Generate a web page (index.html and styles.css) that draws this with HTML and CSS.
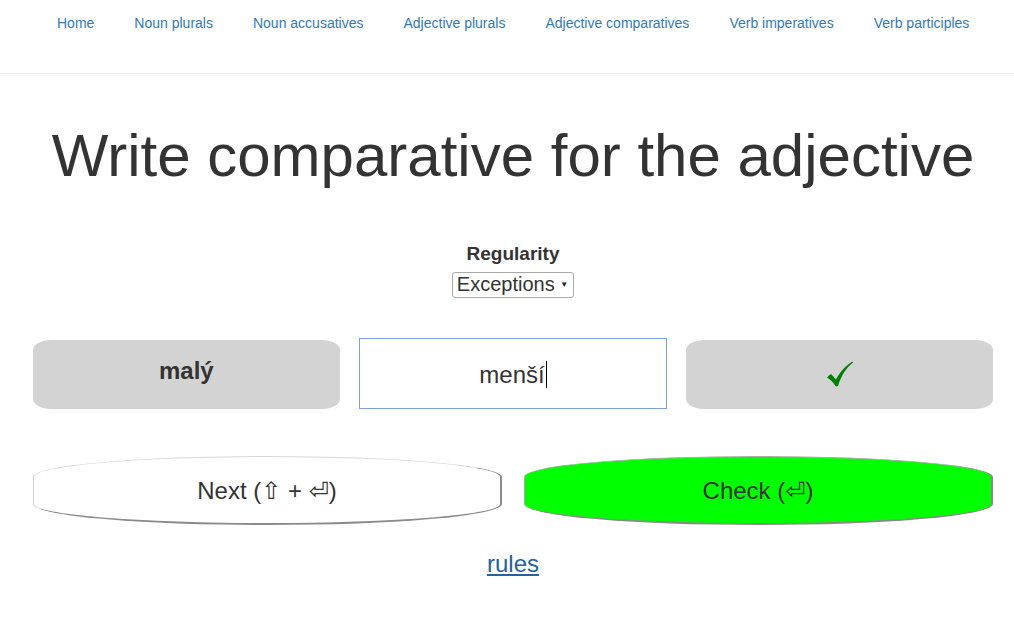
FILE: index.html
```html
<!DOCTYPE html>
<html>
<head>
<meta charset="utf-8">
<link rel="stylesheet" href="styles.css">
</head>
<body>
<nav class="topnav">
  <a href="#">Home</a>
  <a href="#">Noun plurals</a>
  <a href="#">Noun accusatives</a>
  <a href="#">Adjective plurals</a>
  <a href="#">Adjective comparatives</a>
  <a href="#">Verb imperatives</a>
  <a href="#">Verb participles</a>
</nav>
<main class="main">
  <h1 class="title">Write comparative for the adjective</h1>
  <div class="regularity">
    <div class="reg-label">Regularity</div>
    <div class="select">Exceptions <span class="caret">▼</span></div>
  </div>
  <div class="row">
    <div class="pill word">malý</div>
    <div class="answer">menší<span class="cursor"></span></div>
    <div class="pill result">
      <svg class="tick" width="26" height="26" viewBox="0 0 26 26"><path d="M0 16.5 C1.5 15 2.5 14 4 13 L9 18.5 C13 11 18 5 25.5 0.5 L26 1.5 C19 7 14 15 11 25 L9 25.5 C6 21 3 18.5 0 16.5 Z" fill="#008000"/></svg>
    </div>
  </div>
  <div class="buttons">
    <button class="btn next">Next (⇧ + ⏎)</button>
    <button class="btn check">Check (⏎)</button>
  </div>
  <div class="rules"><a href="#">rules</a></div>
</main>
</body>
</html>
```
FILE: styles.css
```css
* { box-sizing: border-box; }
body {
  margin: 0;
  font-family: "Liberation Sans", Arial, sans-serif;
  color: #333;
  background: #fff;
}
.topnav {
  height: 74px;
  border-bottom: 1px solid #eee;
  display: flex;
  padding-left: 37px;
  padding-top: 14px;
}
.topnav a {
  font-size: 14px;
  color: #337ab7;
  text-decoration: none;
  padding: 0 20px;
  line-height: 18px;
}
.main {
  margin-left: 33px;
  width: 960px;
}
.title {
  margin: 0;
  padding-top: 47px;
  font-weight: normal;
  font-size: 60px;
  line-height: 70px;
  text-align: center;
  color: #333;
}
.regularity {
  margin-top: 52px;
  display: flex;
  flex-direction: column;
  align-items: center;
}
.reg-label {
  font-weight: bold;
  font-size: 19px;
  line-height: 22px;
}
.select {
  margin-top: 7px;
  border: 1px solid #a9a9a9;
  border-radius: 3px;
  font-size: 20px;
  line-height: 23px;
  padding: 0 5px 0 4px;
  height: 26px;
  color: #333;
}
.caret {
  font-size: 8px;
  vertical-align: 4px;
  color: #222;
}
.row {
  margin-top: 40px;
  display: flex;
  gap: 19px;
  align-items: flex-start;
}
.pill {
  flex: 1;
  margin-top: 2px;
  height: 69px;
  background: #d3d3d3;
  border-radius: 18px / 10px;
  display: flex;
  align-items: center;
  justify-content: center;
}
.word {
  font-weight: bold;
  font-size: 24px;
  padding-bottom: 7px;
}
.result {
  padding-bottom: 2px;
}
.tick { display: block; }
.answer {
  flex: 1;
  height: 71px;
  border: 1px solid #7aa1e8;
  display: flex;
  align-items: center;
  justify-content: center;
  font-size: 24px;
  padding-top: 2px;
  color: #333;
}
.cursor {
  display: inline-block;
  width: 1px;
  height: 27px;
  background: #000;
  margin-left: 1px;
}
.buttons {
  margin-top: 47px;
  display: flex;
  gap: 22px;
}
.btn {
  flex: 1;
  height: 69px;
  border-radius: 50% / 21px;
  font-family: "Liberation Sans", "DejaVu Sans", sans-serif;
  font-size: 24px;
  color: #333;
  border-style: solid;
  border-width: 1px 2px 2px 1px;
  border-color: #d8d8d8 #8a8a8a #8a8a8a #d0d0d0;
  padding: 2px 0 0 0;
}
.next { background: #fff; }
.check { background: #00ff00; border-top-color: #aaa; border-left-color: #aaa; }
.rules {
  margin-top: 25px;
  text-align: center;
  font-size: 24px;
}
.rules a {
  color: #23639e;
  text-decoration: underline;
}
```
